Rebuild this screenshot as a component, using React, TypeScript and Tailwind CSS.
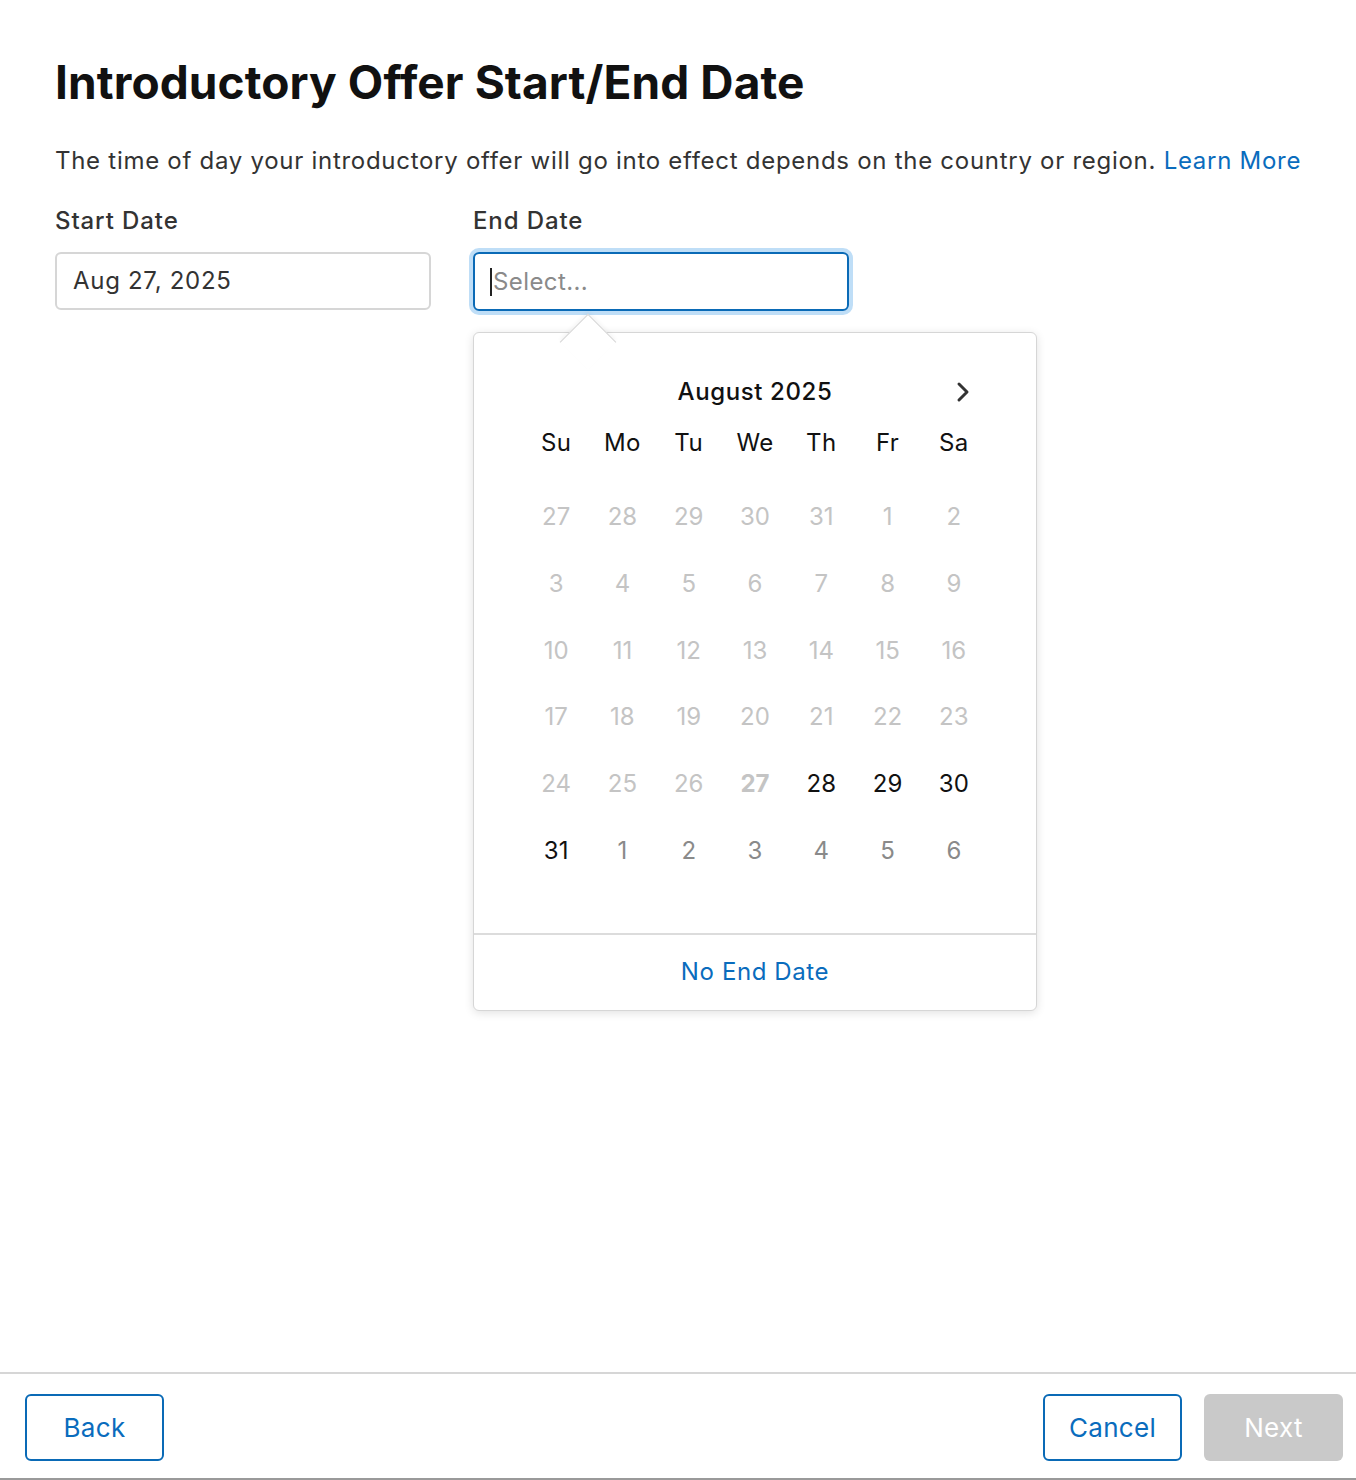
import React from 'react';

type Day = { n: number; tone: 'off' | 'past' | 'start' | 'on' | 'next' };

const WEEKDAYS = ['Su', 'Mo', 'Tu', 'We', 'Th', 'Fr', 'Sa'];

// Build August 2025 grid, dates before the start date are disabled
const buildDays = (): Day[] => {
  const days: Day[] = [];
  [27, 28, 29, 30, 31].forEach((n) => days.push({ n, tone: 'off' }));
  for (let n = 1; n <= 31; n++) {
    if (n < 27) days.push({ n, tone: 'past' });
    else if (n === 27) days.push({ n, tone: 'start' });
    else days.push({ n, tone: 'on' });
  }
  for (let n = 1; n <= 6; n++) days.push({ n, tone: 'next' });
  return days;
};

const toneClass: Record<Day['tone'], string> = {
  off: 'text-[#c4c4c4]',
  past: 'text-[#c4c4c4]',
  start: 'text-[#c4c4c4] font-bold',
  on: 'text-[#111111]',
  next: 'text-[#8a8a8a]',
};

const Calendar: React.FC = () => {
  const days = buildDays();
  return (
    <div className="absolute left-0 top-[80px] z-10 w-[564px] rounded-[6px] border border-[#d6d6d6] bg-white shadow-[0_2px_10px_rgba(0,0,0,0.12)]">
      {/* arrow */}
      <div className="absolute left-[94px] top-[-11px] h-[40px] w-[40px] rotate-45 border-l border-t border-[#d6d6d6] bg-white shadow-[-2px_-2px_4px_rgba(0,0,0,0.04)]"></div>
      <div className="relative px-[49px] pb-[49px] pt-[39px]">
        <div className="relative flex h-[40px] items-center justify-center">
          <span className="text-[24px] font-medium tracking-[0.6px] text-[#111111]">August 2025</span>
          <button className="absolute right-[16px] top-[8px]">
            <svg width="16" height="24" viewBox="0 0 16 24" fill="none">
              <path d="M4 4 L12 12 L4 20" stroke="#333333" strokeWidth="3" strokeLinecap="round" strokeLinejoin="round" />
            </svg>
          </button>
        </div>
        <div className="mt-[11px] grid h-[40px] grid-cols-7">
          {WEEKDAYS.map((d) => (
            <div key={d} className="flex items-center justify-center text-[24px] tracking-[0.4px] text-[#111111]">
              {d}
            </div>
          ))}
        </div>
        <div className="mt-[21px] grid grid-cols-7">
          {days.map((d, i) => (
            <div
              key={i}
              className={`flex h-[66.67px] items-center justify-center text-[24px] ${toneClass[d.tone]}`}
            >
              {d.n}
            </div>
          ))}
        </div>
      </div>
      <div className="flex h-[77px] items-center justify-center border-t-2 border-[#dcdcdc] text-[24px] tracking-[0.6px] text-[#0a6cbd]">
        No End Date
      </div>
    </div>
  );
};

const App: React.FC = () => {
  return (
    <div className="flex h-[1480px] w-full flex-col bg-white font-['Inter',sans-serif] text-[#1d1d1f]">
      <div className="flex-1 px-[55px] pt-[54px]">
        <h1 className="text-[46px] font-bold leading-[56px] tracking-[0.1px] text-[#111111]">
          Introductory Offer Start/End Date
        </h1>
        <p className="mt-[35px] whitespace-nowrap text-[24px] leading-[32px] tracking-[0.72px] text-[#333333]">
          The time of day your introductory offer will go into effect depends on the country or region.{' '}
          <span className="text-[#0a6cbd]">Learn More</span>
        </p>
        <div className="mt-[29px] flex gap-[42px]">
          <div className="w-[376px]">
            <div className="text-[24px] font-medium leading-[30px] tracking-[0.9px] text-[#333333]">Start Date</div>
            <div className="mt-[16px] flex h-[58px] items-center rounded-[6px] border-2 border-[#d6d6d6] px-[16px] text-[24px] tracking-[0.7px] text-[#333333]">
              Aug 27, 2025
            </div>
          </div>
          <div className="w-[376px]">
            <div className="text-[24px] font-medium leading-[30px] tracking-[0.9px] text-[#333333]">End Date</div>
            <div className="relative mt-[16px]">
              <div className="flex h-[59px] items-center rounded-[6px] border-2 border-[#0a6ab6] px-[15px] text-[24px] tracking-[0.4px] text-[#8a8a8a] shadow-[0_0_0_4px_#bfdef7]">
                <span className="mr-[1px] inline-block h-[28px] w-[2px] bg-[#222222]"></span>
                Select...
              </div>
              <Calendar />
            </div>
          </div>
        </div>
      </div>
      <div className="flex h-[108px] items-start justify-between border-t-2 border-b-2 border-t-[#d6d6d6] border-b-[#9a9a9a] pl-[25px] pr-[13px] pt-[20px]">
        <button className="h-[67px] w-[139px] rounded-[6px] border-2 border-[#0a6ab6] text-[26px] tracking-[0.3px] text-[#0a6cbd]">
          Back
        </button>
        <div className="flex gap-[22px]">
          <button className="h-[67px] w-[139px] rounded-[6px] border-2 border-[#0a6ab6] text-[26px] tracking-[0.3px] text-[#0a6cbd]">
            Cancel
          </button>
          <button className="h-[67px] w-[139px] rounded-[6px] bg-[#c9c9c9] text-[26px] tracking-[0.3px] text-white">
            Next
          </button>
        </div>
      </div>
    </div>
  );
};

export default App;
